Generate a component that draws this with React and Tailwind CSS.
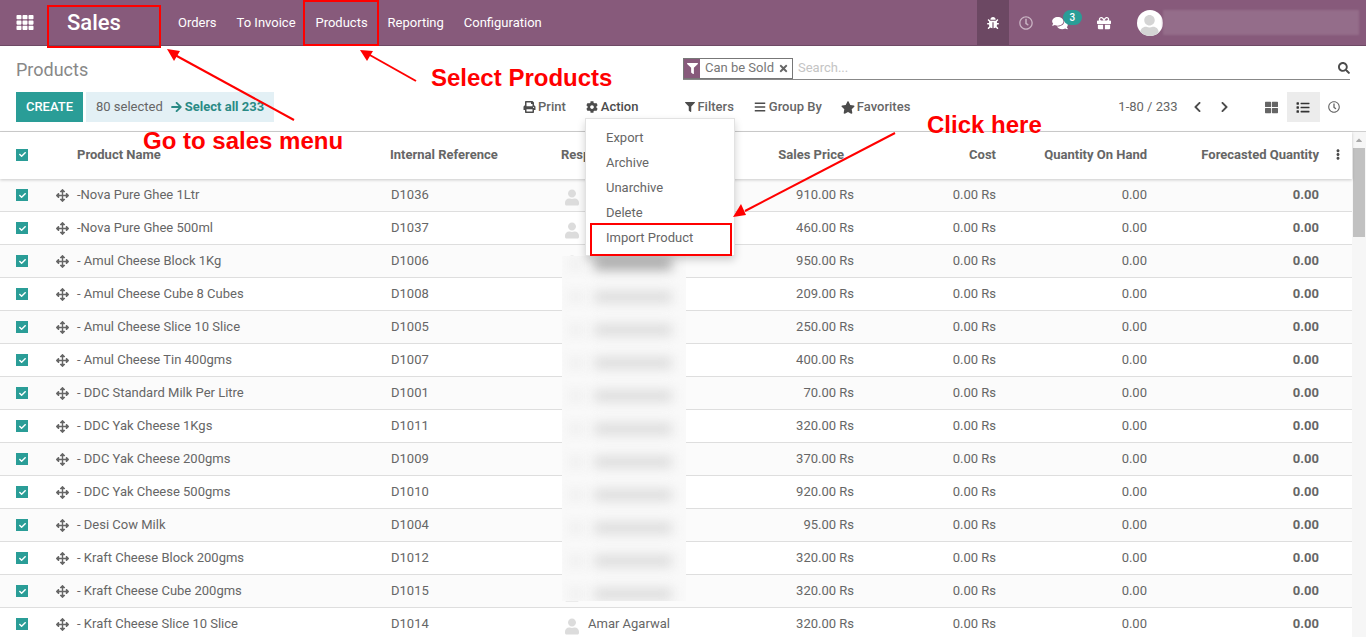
import React from 'react';
import {
  FaTh, FaBug, FaRegClock, FaComments, FaGift, FaPrint, FaCog, FaFilter, FaBars, FaStar,
  FaArrowRight, FaSearch, FaTimes, FaChevronLeft, FaChevronRight, FaThLarge, FaList,
  FaEllipsisV, FaCheck, FaArrowsAlt, FaUser, FaCaretUp,
} from 'react-icons/fa';

const products = [
  ['-Nova Pure Ghee 1Ltr', 'D1036', '910.00'],
  ['-Nova Pure Ghee 500ml', 'D1037', '460.00'],
  ['- Amul Cheese Block 1Kg', 'D1006', '950.00'],
  ['- Amul Cheese Cube 8 Cubes', 'D1008', '209.00'],
  ['- Amul Cheese Slice 10 Slice', 'D1005', '250.00'],
  ['- Amul Cheese Tin 400gms', 'D1007', '400.00'],
  ['- DDC Standard Milk Per Litre', 'D1001', '70.00'],
  ['- DDC Yak Cheese 1Kgs', 'D1011', '320.00'],
  ['- DDC Yak Cheese 200gms', 'D1009', '370.00'],
  ['- DDC Yak Cheese 500gms', 'D1010', '920.00'],
  ['- Desi Cow Milk', 'D1004', '95.00'],
  ['- Kraft Cheese Block 200gms', 'D1012', '320.00'],
  ['- Kraft Cheese Cube 200gms', 'D1015', '320.00'],
  ['- Kraft Cheese Slice 10 Slice', 'D1014', '320.00'],
];

const Check = () => (
  <span className="flex h-3 w-3 items-center justify-center bg-[#2a9d97] text-white">
    <FaCheck className="h-[7px] w-[7px]" />
  </span>
);

const Arrow = ({ x1, y1, x2, y2, head }) => (
  <>
    <line x1={x1} y1={y1} x2={x2} y2={y2} stroke="#ff0000" strokeWidth="2" />
    <polygon points={head} fill="#ff0000" />
  </>
);

const App = () => {
  return (
    <div className="relative h-[637px] w-[1366px] overflow-hidden bg-white font-['Roboto',sans-serif] text-[13px] text-[#4c4c4c]">
      {/* Top nav */}
      <nav className="flex h-[46px] items-center border-b border-[#6e4a65] bg-[#875a7b] text-white">
        <FaTh className="ml-4 h-[17px] w-[18px]" />
        <div className="ml-[13px] mt-[5px] flex h-[43px] w-[114px] items-center self-start border-2 border-[#ff0000] pb-[7px] pl-[18px] text-[22px] leading-none font-medium">
          Sales
        </div>
        <div className="ml-[17px] text-[13px]">Orders</div>
        <div className="ml-[20px] text-[13px]">To Invoice</div>
        <div className="ml-[7px] flex h-[46px] w-[76px] items-center justify-center border-2 border-[#ff0000] pl-[2px] text-[13px]">Products</div>
        <div className="ml-[9px] text-[13px]">Reporting</div>
        <div className="ml-[20px] text-[13px]">Configuration</div>
        <div className="ml-[435px] flex h-[45px] w-[32px] items-center justify-center bg-[#6c4863]">
          <FaBug className="h-[12px] w-[12px]" />
        </div>
        <FaRegClock className="ml-[10px] h-[14px] w-[14px] text-[#c9b3c3]" />
        <div className="relative ml-[19px]">
          <FaComments className="h-[14px] w-[16px]" />
          <span className="absolute -top-[6px] left-[11px] flex h-[15px] w-[19px] items-center justify-center rounded-full bg-[#2a9d97] text-[10px] font-medium">3</span>
        </div>
        <FaGift className="ml-[29px] h-[14px] w-[14px]" />
        <div className="ml-[26px] flex h-[26px] w-[26px] items-end justify-center overflow-hidden rounded-full bg-white">
          <FaUser className="h-[21px] w-[19px] text-[#d4d4d4]" />
        </div>
        <div className="h-[25px] w-[196px] bg-[#946d8a] blur-[1px]" />
      </nav>

      {/* Control panel */}
      <div className="h-[86px] border-b border-[#cfcfcf]">
        <div className="flex h-[45px] items-start">
          <div className="ml-4 mt-[13px] w-[667px] text-[18px] leading-[21px] text-[#888888]">Products</div>
          <div className="mt-[11px] flex h-[23px] w-[667px] items-center border-b border-[#888888]">
            <div className="flex h-[21px] w-[110px] items-center border border-[#777777]">
              <span className="flex h-[19px] w-[16px] items-center justify-center bg-[#875a7b] text-white">
                <FaFilter className="h-[11px] w-[11px]" />
              </span>
              <span className="ml-[5px] text-[#777777]">Can be Sold</span>
              <FaTimes className="ml-[4px] h-[11px] w-[11px] text-[#666666]" />
            </div>
            <span className="ml-[5px] text-[#c4c4c4]">Search...</span>
            <FaSearch className="ml-auto h-[12px] w-[12px] text-[#4c4c4c]" />
          </div>
        </div>
        <div className="mt-[1px] flex h-[30px] items-center">
          <button className="ml-4 flex h-[30px] w-[67px] items-center justify-center bg-[#2a9d97] text-[13px] font-medium text-white">CREATE</button>
          <div className="ml-[3px] flex h-[30px] w-[188px] items-center bg-[#e3f0f5] pl-[10px] text-[#666666]">
            80 selected
            <FaArrowRight className="ml-[8px] mr-[3px] h-[12px] w-[11px] text-[#2a8a85]" />
            <span className="font-bold text-[#2a8a85]">Select all 233</span>
          </div>
          <div className="ml-[249px] flex items-center">
            <FaPrint className="h-[12px] w-[13px]" />
            <span className="ml-[2px] font-medium text-[#666666]">Print</span>
          </div>
          <div className="ml-[20px] flex items-center">
            <FaCog className="h-[12px] w-[12px]" />
            <span className="ml-[3px] font-medium">Action</span>
          </div>
          <div className="ml-[47px] flex items-center">
            <FaFilter className="h-[10px] w-[10px]" />
            <span className="ml-[2px] font-medium text-[#666666]">Filters</span>
          </div>
          <div className="ml-[20px] flex items-center">
            <FaBars className="h-[12px] w-[12px]" />
            <span className="ml-[3px] font-medium text-[#666666]">Group By</span>
          </div>
          <div className="ml-[19px] flex items-center">
            <FaStar className="h-[13px] w-[14px]" />
            <span className="ml-[2px] font-medium text-[#666666]">Favorites</span>
          </div>
          <span className="ml-[208px] text-[#666666]">1-80 / 233</span>
          <FaChevronLeft className="ml-[15px] h-[12px] w-[9px]" />
          <FaChevronRight className="ml-[18px] h-[12px] w-[9px]" />
          <FaThLarge className="ml-[36px] h-[13px] w-[13px] text-[#666666]" />
          <div className="ml-[9px] flex h-[30px] w-[33px] items-center justify-center bg-[#ececec]">
            <FaList className="h-[13px] w-[14px] text-[#333333]" />
          </div>
          <FaRegClock className="ml-[8px] h-[12px] w-[12px] text-[#666666]" />
        </div>
      </div>

      {/* List + scrollbar */}
      <div className="flex">
        <div className="w-[1352px]">
          <div className="relative flex h-[47px] items-center pb-[2px] font-bold text-[#666666] shadow-[0_1px_3px_rgba(0,0,0,0.2)]">
            <div className="w-[77px] pl-4"><Check /></div>
            <div className="w-[313px]">Product Name</div>
            <div className="w-[171px]">Internal Reference</div>
            <div className="w-[183px]">Responsible</div>
            <div className="w-[100px] text-right">Sales Price</div>
            <div className="w-[152px] text-right">Cost</div>
            <div className="w-[151px] text-right">Quantity On Hand</div>
            <div className="w-[172px] text-right">Forecasted Quantity</div>
            <FaEllipsisV className="ml-[17px] h-[11px] w-[4px] text-[#4c4c4c]" />
          </div>
          {products.map(([name, ref, price], i) => (
            <div
              key={ref}
              className={`flex h-[33px] items-center border-b border-[#dedede] text-[#666666] ${i % 2 === 0 ? 'bg-[#fbfbfb]' : 'bg-white'}`}
            >
              <div className="w-[56px] pl-4"><Check /></div>
              <div className="w-[21px]"><FaArrowsAlt className="h-[13px] w-[13px] text-[#666666]" /></div>
              <div className="w-[314px]">{name}</div>
              <div className="w-[170px]">{ref}</div>
              <div className="flex w-[193px] items-center">
                <FaUser className="ml-[4px] mt-[4px] h-[17px] w-[14px] text-[#dcdcdc]" />
                <span className="ml-[9px]">Amar Agarwal</span>
              </div>
              <div className="w-[100px] text-right">{price} Rs</div>
              <div className="w-[142px] text-right">0.00 Rs</div>
              <div className="w-[151px] text-right">0.00</div>
              <div className="w-[172px] text-right font-bold">0.00</div>
            </div>
          ))}
        </div>
        <div className="w-[14px] bg-[#f6f6f6]">
          <div className="flex h-[16px] items-center justify-center text-[#a8a8a8]"><FaCaretUp className="h-[10px] w-[10px]" /></div>
          <div className="mx-auto h-[89px] w-[12px] bg-[#c1c1c1]" />
        </div>
      </div>

      {/* Blurred-out names */}
      <div className="absolute left-[562px] top-[256px] flex h-[345px] w-[124px] flex-col gap-[17px] overflow-hidden bg-[#f9f9f9] pl-[6px]">
        {Array.from({ length: 11 }).map((_, i) => (
          <div key={i} className="flex h-[16px] shrink-0 items-center gap-[10px]">
            <div className="h-[14px] w-[16px] bg-[#f1f1f1] blur-[5px]" />
            <div className={`h-[12px] w-[78px] blur-[6px] ${i === 0 ? 'bg-[#a8a8a8]' : 'bg-[#dcdcdc]'}`} />
          </div>
        ))}
      </div>

      {/* Action dropdown */}
      <div className="absolute left-[585px] top-[118px] h-[138px] w-[150px] border border-[#e2e2e2] bg-white pt-[6px] text-[#666666] shadow-[0_4px_8px_rgba(0,0,0,0.18)]">
        {['Export', 'Archive', 'Unarchive', 'Delete', 'Import Product'].map((item) => (
          <div key={item} className="flex h-[25px] items-center pl-[20px]">{item}</div>
        ))}
      </div>
      <div className="absolute left-[590px] top-[223px] h-[33px] w-[142px] border-2 border-[#ff0000]" />

      {/* Red annotations */}
      <svg className="pointer-events-none absolute left-0 top-0" width="1366" height="637">
        <Arrow x1={294} y1={120} x2={175} y2={55} head="167,49 180,51 174,61" />
        <Arrow x1={416} y1={81} x2={368} y2={54} head="360,50 373,51 367,61" />
        <Arrow x1={895} y1={133} x2={745} y2={211} head="733,217 741,204 746,215" />
      </svg>
      <div className="absolute left-[143px] top-[126px] font-['Liberation_Sans',sans-serif] text-[24px] leading-[30px] font-bold whitespace-nowrap text-[#ff0000]">Go to sales menu</div>
      <div className="absolute left-[431px] top-[63px] font-['Liberation_Sans',sans-serif] text-[24px] leading-[30px] font-bold whitespace-nowrap text-[#ff0000]">Select Products</div>
      <div className="absolute left-[927px] top-[110px] font-['Liberation_Sans',sans-serif] text-[24px] leading-[30px] font-bold whitespace-nowrap text-[#ff0000]">Click here</div>
    </div>
  );
};

export default App;
